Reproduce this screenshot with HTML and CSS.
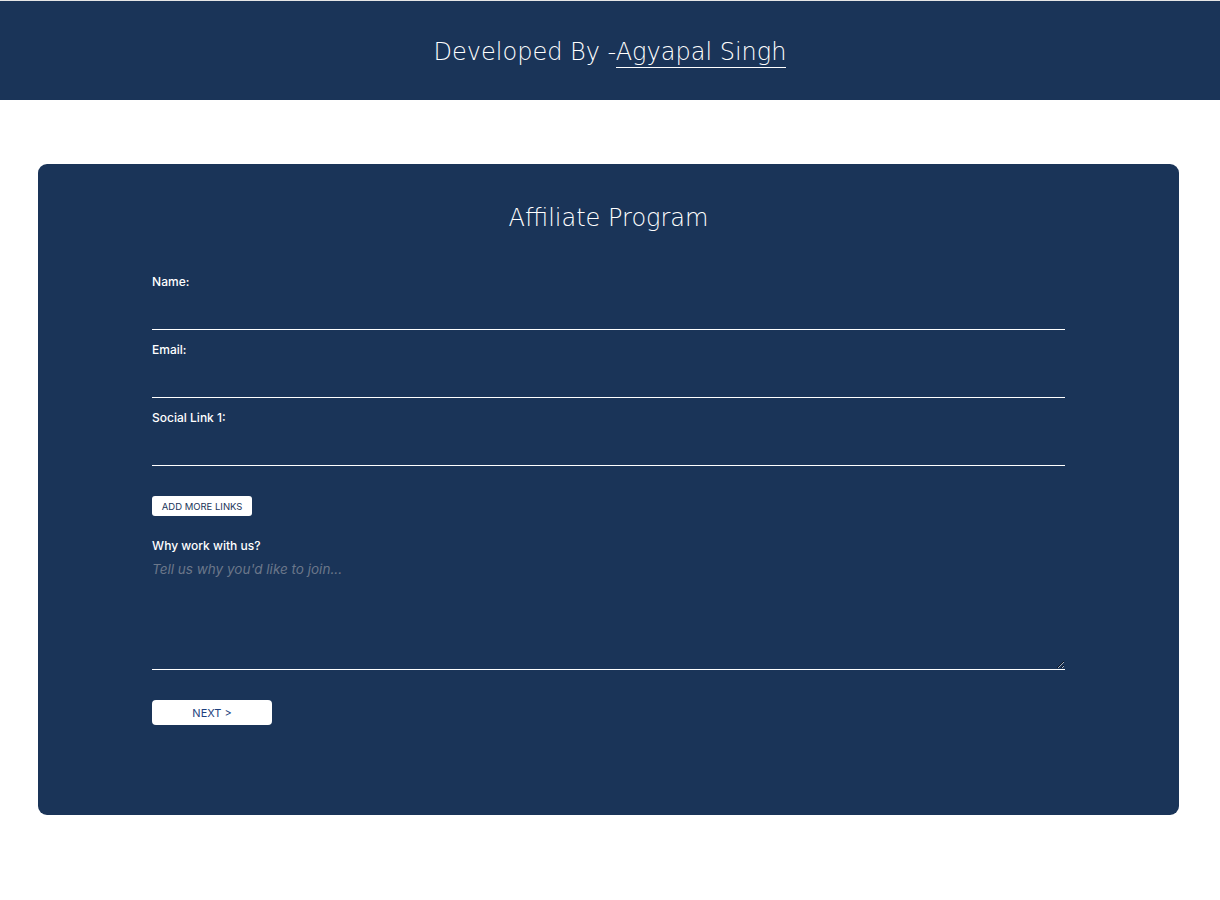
FILE: index.html
```html
<!DOCTYPE html>
<html lang="en">
<head>
<meta charset="utf-8">
<title>Affiliate Program</title>
<link rel="stylesheet" href="styles.css">
</head>
<body>
<header class="topbar">
  <h1 class="dev">Developed By -<a class="dev-link" href="#">Agyapal Singh</a></h1>
</header>
<main class="page">
  <section class="card">
    <h2 class="card-title">Affiliate Program</h2>
    <form class="form">
      <div class="field">
        <label class="label" for="name">Name:</label>
        <input class="input" id="name" type="text">
      </div>
      <div class="field">
        <label class="label" for="email">Email:</label>
        <input class="input" id="email" type="email">
      </div>
      <div class="field">
        <label class="label" for="link1">Social Link 1:</label>
        <input class="input" id="link1" type="text">
      </div>
      <button type="button" class="btn-add">ADD MORE LINKS</button>
      <div class="field field-area">
        <label class="label" for="why">Why work with us?</label>
        <textarea class="area" id="why" placeholder="Tell us why you'd like to join..."></textarea>
      </div>
      <button type="button" class="btn-next">NEXT &gt;</button>
    </form>
  </section>
</main>
</body>
</html>
```
FILE: styles.css
```css
* { box-sizing: border-box; }
html, body { margin: 0; padding: 0; background: #ffffff; }
body { font-family: "Open Sans", "Liberation Sans", sans-serif; }

.topbar {
  background: #1a3458;
  border-top: 1px solid #e6e6e6;
  height: 100px;
  display: flex;
  align-items: center;
  justify-content: center;
}
.dev {
  margin: 0;
  color: #ffffff;
  font-family: "DejaVu Sans", sans-serif;
  font-weight: 200;
  font-size: 24px;
  line-height: 1;
  padding-top: 2px;
}
.dev-link {
  color: #ffffff;
  text-decoration: none;
  border-bottom: 1px solid #ffffff;
  padding-bottom: 1px;
}

.page { padding: 64px 41px 0 38px; }

.card {
  background: #1a3458;
  border-radius: 9px;
  height: 651px;
  padding-top: 40px;
}
.card-title {
  margin: 0;
  text-align: center;
  color: #ffffff;
  font-family: "DejaVu Sans", sans-serif;
  font-weight: 200;
  font-size: 24px;
  line-height: 28px;
}

.form {
  width: 80%;
  margin: 42px auto 0;
  display: flex;
  flex-direction: column;
  align-items: flex-start;
}
.field {
  width: 100%;
  display: flex;
  flex-direction: column;
  margin-bottom: 12px;
}
.label {
  color: #ffffff;
  font-family: "Inter", sans-serif;
  font-weight: 500;
  font-size: 12px;
  line-height: 16px;
}
.input {
  height: 40px;
  background: transparent;
  border: none;
  border-bottom: 1px solid #ffffff;
  outline: none;
  color: #ffffff;
  padding: 0;
}

.btn-add {
  margin-top: 18px;
  width: 100px;
  height: 20px;
  background: #ffffff;
  border: none;
  border-radius: 3px;
  color: #1a3458;
  font-family: "Inter", sans-serif;
  font-size: 9.5px;
  padding: 0;
  margin-bottom: 22px;
}

.area {
  height: 116px;
  background: transparent;
  border: none;
  border-bottom: 1px solid #ffffff;
  outline: none;
  color: #ffffff;
  padding: 7px 0 0;
  font-family: "Inter", sans-serif;
  font-size: 13.5px;
  resize: vertical;
}
.area::placeholder {
  color: #6b778a;
  font-style: italic;
}

.btn-next {
  margin-top: 18px;
  width: 120px;
  height: 25px;
  background: #ffffff;
  border: none;
  border-radius: 4px;
  color: #1d3f7e;
  font-family: "Inter", sans-serif;
  font-size: 11px;
  padding: 0;
}
```
